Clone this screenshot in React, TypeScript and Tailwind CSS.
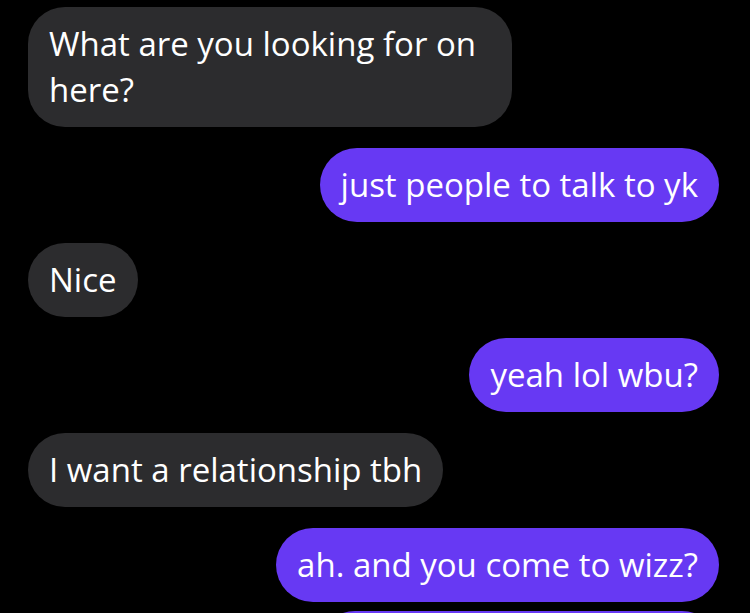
const messages: { from: "them" | "me"; text: string }[] = [
  { from: "them", text: "What are you looking for on here?" },
  { from: "me", text: "just people to talk to yk" },
  { from: "them", text: "Nice" },
  { from: "me", text: "yeah lol wbu?" },
  { from: "them", text: "I want a relationship tbh" },
  { from: "me", text: "ah. and you come to wizz?" },
];

export default function App() {
  return (
    <main
      className="h-[613px] w-[750px] overflow-hidden bg-black pt-[7px] pl-[28px] pr-[31px]"
      style={{ fontFamily: "'Open Sans', 'Noto Sans', sans-serif" }}
    >
      <div className="flex flex-col gap-[21px]">
        {messages.map((m, i) => (
          <div
            key={i}
            className={`flex ${m.from === "me" ? "justify-end" : "justify-start"}`}
          >
            <div
              className={`max-w-[484px] rounded-[37px] px-[21px] py-[14px] text-[33px] leading-[46px] text-white ${
                m.from === "me" ? "bg-[#6739f3]" : "bg-[#2c2c2e]"
              }`}
            >
              {m.text}
            </div>
          </div>
        ))}
      </div>
      {/* next message, cut off by the bottom edge */}
      <div className="mt-[9px] flex justify-end">
        <div className="h-[74px] w-[401px] rounded-[37px] bg-[#6739f3]" />
      </div>
    </main>
  );
}
